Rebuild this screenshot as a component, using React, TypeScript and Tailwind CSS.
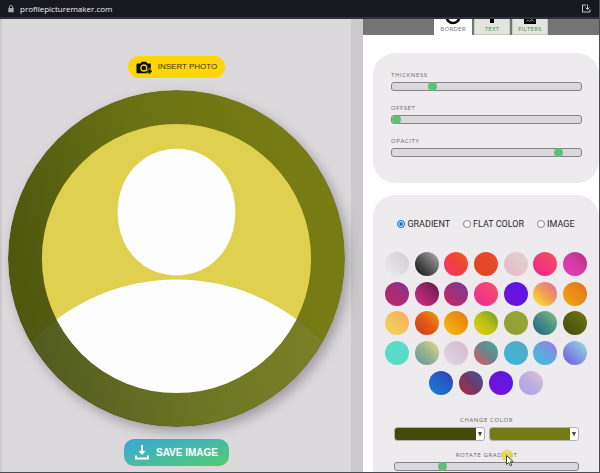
import { useState } from "react";
import type { ReactNode } from "react";

const SWATCHES: { name: string; fill: string }[] = [
  { name: "Silver", fill: "bg-linear-to-tr from-[#eeebee] to-[#cfcfcf]" },
  { name: "Graphite", fill: "bg-linear-to-tr from-[#111111] to-[#b5b5b5]" },
  { name: "Flame", fill: "bg-linear-to-tr from-[#fb2a6e] via-[#f0403a] to-[#f05a10]" },
  { name: "Ember", fill: "bg-linear-to-tr from-[#e04a14] via-[#e6452a] to-[#e2502c]" },
  { name: "Blush", fill: "bg-linear-to-tr from-[#e3b8d2] via-[#e5c6c6] to-[#e2d2d8]" },
  { name: "Rose", fill: "bg-linear-to-tr from-[#f01c8c] to-[#f5505c]" },
  { name: "Orchid", fill: "bg-linear-to-tr from-[#e040b8] via-[#d53ca6] to-[#b0307c]" },
  { name: "Berry", fill: "bg-linear-to-tr from-[#bb2a62] via-[#a62c74] to-[#7c3092]" },
  { name: "Plum", fill: "bg-linear-to-tr from-[#d02c8a] via-[#a0246c] to-[#5a1c42]" },
  { name: "Mulberry", fill: "bg-linear-to-tr from-[#c42860] via-[#a03078] to-[#7038a0]" },
  { name: "Pink", fill: "bg-linear-to-tr from-[#f02690] to-[#f64e6c]" },
  { name: "Violet", fill: "bg-linear-to-tr from-[#7010dc] to-[#5a18e0]" },
  { name: "Sunset", fill: "bg-linear-to-tr from-[#ffe800] via-[#f0a050] to-[#e0609a]" },
  { name: "Amber", fill: "bg-linear-to-tr from-[#f5a80c] to-[#e0701c]" },
  { name: "Peach", fill: "bg-linear-to-tr from-[#eadb55] to-[#fca860]" },
  { name: "Rust", fill: "bg-linear-to-tr from-[#cf3020] via-[#e05c14] to-[#f09c0c]" },
  { name: "Honey", fill: "bg-linear-to-tr from-[#f8bc10] to-[#e6780c]" },
  { name: "Lime", fill: "bg-linear-to-tr from-[#e8d004] via-[#bcc018] to-[#6c9c28]" },
  { name: "Moss", fill: "bg-linear-to-tr from-[#8a9e38] to-[#9ca832]" },
  { name: "Pine", fill: "bg-linear-to-tr from-[#246080] via-[#488e84] to-[#90c080]" },
  { name: "Olive", fill: "bg-linear-to-tr from-[#434a0c] to-[#707814]" },
  { name: "Aqua", fill: "bg-linear-to-tr from-[#54e0c4] to-[#60d8cc]" },
  { name: "Sage", fill: "bg-linear-to-tr from-[#5c96a0] via-[#98b490] to-[#e8d880]" },
  { name: "Lilac", fill: "bg-linear-to-tr from-[#e4d8e4] via-[#d8c8dc] to-[#dcb8c4]" },
  { name: "Coral reef", fill: "bg-linear-to-tr from-[#e04060] via-[#708088] to-[#20b0a4]" },
  { name: "Lagoon", fill: "bg-linear-to-tr from-[#34b8dc] to-[#54aac0]" },
  { name: "Sky", fill: "bg-linear-to-tr from-[#34c4dc] via-[#60a4e0] to-[#a070e8]" },
  { name: "Iris", fill: "bg-linear-to-tr from-[#7050dc] via-[#8498e4] to-[#94e4d8]" },
  { name: "Ocean", fill: "bg-linear-to-tr from-[#1080d4] to-[#2c40b8]" },
  { name: "Dusk", fill: "bg-linear-to-tr from-[#b02038] via-[#703868] to-[#3058a0]" },
  { name: "Indigo", fill: "bg-linear-to-tr from-[#7410e0] to-[#5c18dc]" },
  { name: "Lavender", fill: "bg-linear-to-tr from-[#a8a4e8] via-[#bcaee0] to-[#e0c4d4]" },
];

const LABEL = "font-['Open_Sans','Noto_Sans',sans-serif] text-[6px] leading-2 tracking-widest text-[#6a686a]";

const RANGE =
  "block h-[9px] w-full appearance-none rounded-[3px] border border-[#858387] bg-[#dad8da] " +
  "[&::-webkit-slider-thumb]:size-[9px] [&::-webkit-slider-thumb]:appearance-none [&::-webkit-slider-thumb]:rounded-full [&::-webkit-slider-thumb]:bg-[#5cc077]";

function Slider({ id, label, start, centered = false }: { id: string; label: string; start: number; centered?: boolean }) {
  const [value, setValue] = useState(start);
  return (
    <div className="flex flex-col gap-[3px]">
      <label htmlFor={id} className={centered ? `${LABEL} text-center` : LABEL}>
        {label}
      </label>
      <input
        id={id}
        type="range"
        min={0}
        max={100}
        value={value}
        onChange={(e) => setValue(Number(e.target.value))}
        className={RANGE}
      />
    </div>
  );
}

function Tab({ label, active = false, children }: { label: string; active?: boolean; children: ReactNode }) {
  return (
    <button
      type="button"
      role="tab"
      aria-selected={active}
      className={
        active
          ? "flex h-4 w-[38px] flex-col items-center bg-white text-[#6d6b6d]"
          : "flex h-4 w-9 flex-col items-center border border-t-0 border-[#c5ccbe] bg-[#e3e4dd] text-[#3f8f4c]"
      }
    >
      <svg viewBox="0 0 18 6" className="h-[6px] w-[18px] shrink-0 text-black" aria-hidden="true">
        {children}
      </svg>
      <span className="font-['Open_Sans','Noto_Sans',sans-serif] text-[6px] leading-[9px] tracking-wider">{label}</span>
    </button>
  );
}

function ColorPicker({ name, fill }: { name: string; fill: string }) {
  return (
    <button
      type="button"
      aria-label={name}
      className="flex h-[14px] flex-1 overflow-hidden rounded-[3px] border border-[#b0aeb0] bg-white"
    >
      <span className={`h-full flex-1 ${fill}`} />
      <span className="flex h-full w-2 items-center justify-center">
        <svg viewBox="0 0 6 6" className="size-[6px]" aria-hidden="true">
          <path d="M1 1h4L3 5.4z" fill="#444" />
        </svg>
      </span>
    </button>
  );
}

function Avatar() {
  return (
    <svg
      viewBox="0 0 338 338"
      className="block w-full rounded-full drop-shadow-[4px_5px_6px_rgba(70,60,80,0.4)]"
      role="img"
      aria-label="Profile picture preview"
    >
      <defs>
        <linearGradient id="ring" x1="0" y1="0.55" x2="0.9" y2="0.35">
          <stop offset="0" stopColor="#404b08" />
          <stop offset="0.5" stopColor="#5c670c" />
          <stop offset="1" stopColor="#6c720e" />
        </linearGradient>
        <clipPath id="frame">
          <circle cx="169" cy="169" r="168" />
        </clipPath>
      </defs>
      <g clipPath="url(#frame)">
        <rect width="338" height="338" fill="#dfd04f" />
        <path d="M169 59C202 59 228 86 228 122C228 160 202 186 169 186C136 186 110 160 110 122C110 86 136 59 169 59Z" fill="#fdfdfe" />
        <circle cx="169" cy="391" r="201" fill="#fdfdfe" />
      </g>
      <circle cx="169" cy="169" r="152" fill="none" stroke="url(#ring)" strokeWidth="34" strokeOpacity="0.9" />
    </svg>
  );
}

export default function App() {
  const [fillType, setFillType] = useState("GRADIENT");
  const [swatch, setSwatch] = useState("Olive");

  return (
    <div className="relative flex h-screen flex-col overflow-hidden border-r border-b border-[#4b4b52] bg-white font-['Liberation_Sans',Arial,sans-serif]">
      <header className="flex h-[19px] shrink-0 items-center border-b-2 border-[#302f43] bg-[#181820] pr-2 pl-2 text-[#f0f0f2]">
        <svg viewBox="0 0 6 8" className="h-2 w-[6px]" aria-hidden="true">
          <path d="M1.4 3.5V2a1.6 1.6 0 0 1 3.2 0v1.5" fill="none" stroke="#aaa" strokeWidth="0.9" />
          <rect x="0.3" y="3" width="5.4" height="4.3" rx="0.6" fill="#aaa" />
        </svg>
        <span className="ml-[6px] flex-1 font-['Open_Sans','Noto_Sans',sans-serif] text-[8px] leading-4">
          profilepicturemaker.com
        </span>
        <button type="button" aria-label="Install app">
          <svg viewBox="0 0 10 9" className="h-[9px] w-[10px]" fill="none" stroke="#d8d8dc" strokeWidth="0.9" aria-hidden="true">
            <path d="M5 1H1.500v7H9V5.500M6.500 .5v5M4.500 3.500 6.500 5.500 8.500 3.500" />
          </svg>
        </button>
      </header>

      <main className="flex min-h-0 flex-1">
        <section className="flex w-[60.6%] shrink-0 flex-col items-center border-r-12 border-l-2 border-r-[#cbc9cb] border-l-[#cbc9cb] bg-[#dbd9db] px-[6px] pt-[37px]">
          <button
            type="button"
            className="flex h-[22px] shrink-0 items-center gap-[6px] rounded-full bg-[#ffd603] px-2 text-[8px] text-[#39341c]"
          >
            <svg viewBox="0 0 16 13" className="h-[13px] w-4" aria-hidden="true">
              <path d="M1.5 2.5h3L5.600.8h4.600l1.100 1.700h2.500c.6 0 1 .4 1 1v7.700c0 .6-.4 1-1 1H1.500c-.6 0-1-.4-1-1V3.500c0-.6.4-1 1-1z" fill="#0a0900" />
              <circle cx="7.8" cy="7" r="3" fill="none" stroke="#ffd603" strokeWidth="1.3" />
              <path d="M13.500 7.500v5.500M10.700 10.300h5.300" stroke="#ffd603" strokeWidth="2.600" />
              <path d="M13.500 8v4.800M11.100 10.400h4.800" stroke="#0a0900" strokeWidth="1.700" />
            </svg>
            INSERT PHOTO
          </button>
          <div className="mt-3 w-full">
            <Avatar />
          </div>
          <button
            type="button"
            className="mt-3 flex h-[27px] shrink-0 items-center gap-[7px] rounded-[10px] bg-linear-to-br from-[#3aa8d8] via-[#48b9a4] to-[#52cc6c] px-[11px] text-[10px] font-bold text-white"
          >
            <svg viewBox="0 0 14 15" className="h-[15px] w-[14px]" fill="none" stroke="#fff" strokeWidth="2" aria-hidden="true">
              <path d="M7 0v7" />
              <path d="M3.500 6h7L7 10z" fill="#fff" stroke="none" />
              <path d="M1 10.500v3h12v-3" />
            </svg>
            SAVE IMAGE
          </button>
        </section>

        <section className="flex min-w-0 flex-1 flex-col">
          <div role="tablist" className="flex shrink-0 justify-center gap-[2px] bg-[#747474] pl-5">
            <Tab label="BORDER" active>
              <circle cx="9" cy="-2.500" r="6.500" fill="none" stroke="currentColor" strokeWidth="2.600" />
            </Tab>
            <Tab label="TEXT">
              <rect x="7" y="0" width="4" height="4" fill="currentColor" />
            </Tab>
            <Tab label="FILTERS">
              <rect x="3" y="0" width="12" height="5" fill="currentColor" />
              <path d="M5.500 2.500 7 1l1.500 1.500L11 .5l1.500 2" fill="none" stroke="#e3e4dd" strokeWidth="0.700" />
            </Tab>
          </div>

          <div className="mt-[18px] ml-[10px] flex shrink-0 flex-col gap-[13px] rounded-[22px] bg-[#edebee] pt-[18px] pr-[17px] pb-[26px] pl-[18px]">
            <Slider id="thickness" label="THICKNESS" start={20} />
            <Slider id="offset" label="OFFSET" start={0} />
            <Slider id="opacity" label="OPACITY" start={90} />
          </div>

          <div className="mt-3 ml-[10px] flex shrink-0 flex-col rounded-[22px] bg-[#edebee] pt-[23px] pb-6">
            <div
              role="radiogroup"
              aria-label="Border fill"
              className="flex justify-center gap-[13px] font-[Roboto,sans-serif] text-[9px] leading-3 text-[#2c2a2c]"
            >
              {["GRADIENT", "FLAT COLOR", "IMAGE"].map((option) => (
                <label key={option} className="flex items-center gap-[2px]">
                  <input
                    type="radio"
                    name="fill"
                    checked={fillType === option}
                    onChange={() => setFillType(option)}
                    className="size-2 appearance-none rounded-full border border-[#858585] bg-white checked:border-[#1876d2] checked:bg-[#1876d2] checked:shadow-[inset_0_0_0_1px_white]"
                  />
                  {option}
                </label>
              ))}
            </div>

            <div className="mt-[19px] flex flex-wrap justify-center px-[9px]">
              {SWATCHES.map(({ name, fill }) => (
                <div key={name} className="flex aspect-square w-1/7 items-center justify-center">
                  <button
                    type="button"
                    aria-label={name}
                    aria-pressed={swatch === name}
                    onClick={() => setSwatch(name)}
                    className={`size-6 rounded-full ${fill}`}
                  />
                </div>
              ))}
            </div>

            <div className="mt-[18px] flex flex-col gap-[10px] pr-5 pl-[21px]">
              <div className="flex flex-col gap-[3px]">
                <span className={`${LABEL} text-center`}>CHANGE COLOR</span>
                <div className="flex gap-1">
                  <ColorPicker name="First color" fill="bg-[#434b0c]" />
                  <ColorPicker name="Second color" fill="bg-[#747a14]" />
                </div>
              </div>
              <Slider id="rotate" label="ROTATE GRADIENT" start={25} centered />
            </div>
          </div>
        </section>
      </main>

      <svg viewBox="0 0 16 20" className="pointer-events-none absolute top-[449px] left-[500px] h-5 w-4" aria-hidden="true">
        <circle cx="7" cy="6.500" r="6" fill="#e3d84e" fillOpacity="0.85" />
        <path d="M6.500 6.500v9l2.200-2 1.500 3.300 1.600-.7-1.500-3.200 2.900-.2z" fill="#fff" stroke="#333" strokeWidth="0.900" />
      </svg>
    </div>
  );
}
